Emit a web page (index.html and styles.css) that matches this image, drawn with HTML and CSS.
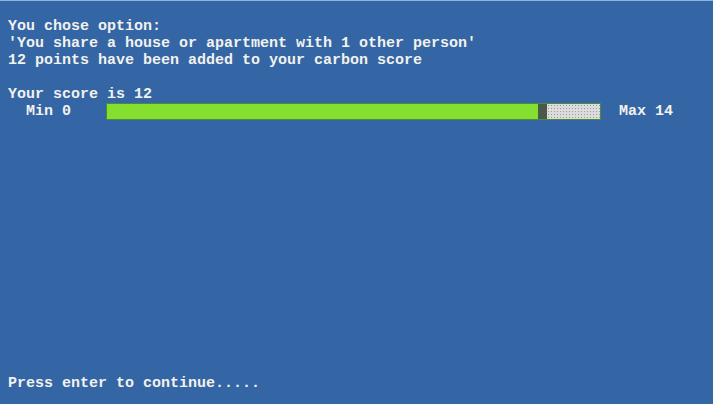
FILE: index.html
```html
<!DOCTYPE html>
<html>
<head>
<meta charset="utf-8">
<link rel="stylesheet" href="styles.css">
</head>
<body>
<div class="screen">
  <div class="top">
    <div class="line">You chose option:</div>
    <div class="line">'You share a house or apartment with 1 other person'</div>
    <div class="line">12 points have been added to your carbon score</div>
    <div class="line">&nbsp;</div>
    <div class="line">Your score is 12</div>
    <div class="row">
      <span class="label">  Min 0    </span>
      <div class="bar">
        <div class="fill" style="width:431px"></div>
        <div class="marker"></div>
        <div class="rest"></div>
      </div>
      <span class="label">  Max 14</span>
    </div>
  </div>
  <div class="line bottom">Press enter to continue.....</div>
</div>
</body>
</html>
```
FILE: styles.css
```css
html, body {
  margin: 0;
  padding: 0;
  background: #3465a5;
}
.screen {
  box-sizing: border-box;
  height: 404px;
  border-top: 1px solid #8fb2dc;
  padding: 17px 8px 12px 8px;
  display: flex;
  flex-direction: column;
  font-family: "Liberation Mono", "Courier New", monospace;
  font-weight: bold;
  font-size: 15px;
  line-height: 17px;
  color: #f2f2ee;
}
.line {
  white-space: pre;
  height: 17px;
}
.row {
  display: flex;
  align-items: center;
  height: 17px;
}
.label {
  white-space: pre;
}
.bar {
  box-sizing: border-box;
  width: 495px;
  height: 17px;
  margin-left: -1px;
  margin-right: 0;
  display: flex;
  border: 1px solid #4f8a3c;
}
.fill {
  background: #84df2f;
  height: 100%;
}
.marker {
  width: 9px;
  background: #4b5a48;
  height: 100%;
}
.rest {
  flex: 1;
  height: 100%;
  background-color: #dcdcdc;
  background-image: radial-gradient(circle, #9a9a9a 0.6px, transparent 0.9px);
  background-size: 3px 3px;
}
.bottom {
  margin-top: auto;
}
```
